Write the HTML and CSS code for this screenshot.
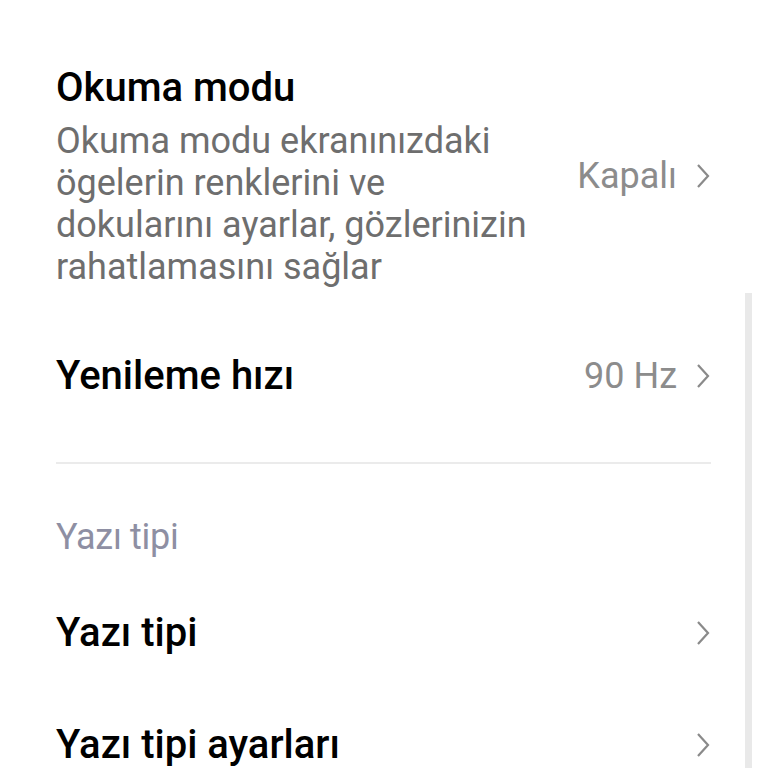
FILE: index.html
```html
<!DOCTYPE html>
<html lang="tr">
<head>
    <meta charset="UTF-8">
    <meta name="viewport" content="width=device-width, initial-scale=1.0">
    <title>Ekran</title>
    <link rel="stylesheet" href="styles.css">
</head>
<body>
    <div class="screen">
        <ul class="pref-list">
            <li class="pref-row pref-row-tall">
                <div class="pref-text">
                    <div class="pref-title">Okuma modu</div>
                    <div class="pref-summary">Okuma modu ekranınızdaki ögelerin renklerini ve dokularını ayarlar, gözlerinizin rahatlamasını sağlar</div>
                </div>
                <div class="pref-value">
                    <span>Kapalı</span>
                    <svg class="chevron" viewBox="0 0 16 28"><path d="M3 3 L13 14 L3 25"/></svg>
                </div>
            </li>
            <li class="pref-row">
                <div class="pref-text">
                    <div class="pref-title">Yenileme hızı</div>
                </div>
                <div class="pref-value">
                    <span>90 Hz</span>
                    <svg class="chevron" viewBox="0 0 16 28"><path d="M3 3 L13 14 L3 25"/></svg>
                </div>
            </li>
        </ul>

        <hr class="divider">

        <div class="pref-category">Yazı tipi</div>
        <ul class="pref-list">
            <li class="pref-row">
                <div class="pref-text">
                    <div class="pref-title">Yazı tipi</div>
                </div>
                <div class="pref-value">
                    <svg class="chevron" viewBox="0 0 16 28"><path d="M3 3 L13 14 L3 25"/></svg>
                </div>
            </li>
            <li class="pref-row">
                <div class="pref-text">
                    <div class="pref-title">Yazı tipi ayarları</div>
                </div>
                <div class="pref-value">
                    <svg class="chevron" viewBox="0 0 16 28"><path d="M3 3 L13 14 L3 25"/></svg>
                </div>
            </li>
        </ul>

        <div class="scrollbar"></div>
    </div>
</body>
</html>
```

FILE: styles.css
```css
body {
    margin: 0;
    padding: 0;
    background: #fff;
    font-family: Roboto, "Noto Sans", sans-serif;
    color: #000;
}
.screen {
    position: relative;
    height: 768px;
    overflow: hidden;
    padding: 64px 57px 0 56px;
    box-sizing: border-box;
}
.pref-list {
    list-style: none;
    margin: 0;
    padding: 0;
}
.pref-row {
    display: flex;
    align-items: center;
    justify-content: space-between;
    min-height: 112px;
}
.pref-row-tall {
    padding-bottom: 32px;
}
.pref-text {
    flex: 1;
    max-width: 490px;
}
.pref-title {
    font-size: 40px;
    font-weight: 500;
    line-height: 48px;
}
.pref-summary {
    margin-top: 8px;
    font-size: 36px;
    line-height: 42px;
    color: #6e6e6e;
}
.pref-value {
    display: flex;
    align-items: center;
    gap: 18px;
    font-size: 36px;
    color: #8c8c8c;
}
.chevron {
    width: 16px;
    height: 28px;
    fill: none;
    stroke: #8a8a8a;
    stroke-width: 2.2;
}
.divider {
    border: 0;
    border-top: 2px solid #ebebeb;
    margin: 30px 0 0;
}
.pref-category {
    font-size: 36px;
    line-height: 42px;
    color: #8e8fa3;
    letter-spacing: -0.3px;
    padding: 52px 0 19px;
}
.scrollbar {
    position: absolute;
    right: 16px;
    top: 293px;
    bottom: 0;
    width: 7px;
    background: #e9e9e9;
}
```
